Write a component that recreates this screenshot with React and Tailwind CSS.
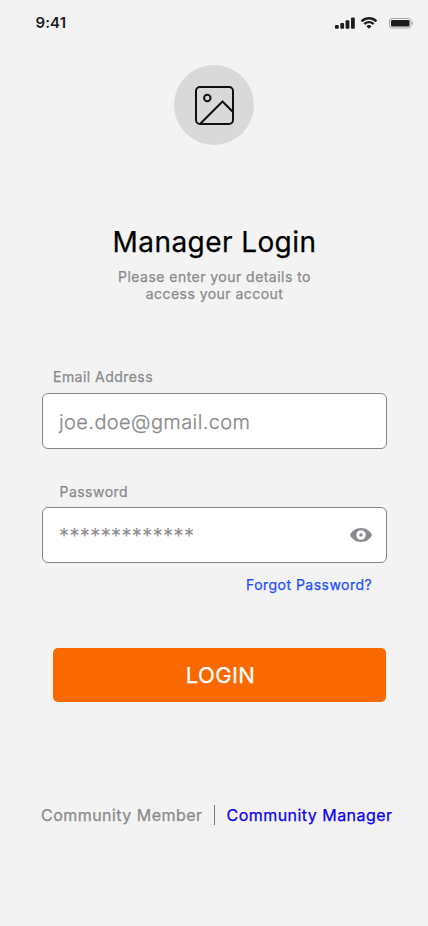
function StatusBar() {
  return (
    <header className="flex h-[46px] items-center justify-between pl-[35.5px] pr-[14px] text-[#1c1c1e] [-webkit-text-stroke:0px]">
      <span className="text-[15px] font-semibold leading-5 tracking-[0.1px]">9:41</span>
      <div className="flex items-center">
        <svg width="20" height="12" viewBox="0 0 20 12" fill="currentColor">
          <rect x="0" y="8" width="3.800" height="3.800" rx="1" />
          <rect x="5.300" y="6" width="3.800" height="5.800" rx="1" />
          <rect x="10.600" y="3.300" width="3.800" height="8.500" rx="1" />
          <rect x="16" y="0.600" width="3.800" height="11.200" rx="1" />
        </svg>
        <svg className="ml-[5px]" width="18" height="12" viewBox="0 0 17 12" fill="currentColor">
          <path d="M8.5 2.4c2.4 0 4.6.9 6.3 2.5.1.1.3.1.5 0l1.2-1.2c.2-.2.2-.4 0-.5-4.4-4.2-11.500-4.200-16 0-.1.1-.1.4 0 .5l1.200 1.200c.1.100.300.100.500 0C3.900 3.300 6.100 2.400 8.500 2.400zM8.500 6.300c1.300 0 2.600.5 3.500 1.400.100.100.400.100.500 0l1.200-1.200c.2-.2.2-.4 0-.5-2.900-2.800-7.500-2.800-10.400 0-.2.100-.2.400 0 .5l1.200 1.200c.100.100.400.100.500 0 1-.9 2.200-1.400 3.500-1.400zM10.800 8.900c.2.200.2.400 0 .5l-2.100 2.100c-.1.100-.4.100-.5 0L6.100 9.400c-.1-.1-.1-.4 0-.5 1.400-1.100 3.300-1.100 4.700 0z" />
        </svg>
        <svg className="ml-[11px]" width="25" height="12" viewBox="0 0 25 12">
          <rect x="0.500" y="1.500" width="21.500" height="9.500" rx="2.500" fill="none" stroke="#a5a5a6" />
          <rect x="2" y="3" width="18.500" height="6.500" rx="1.200" fill="currentColor" />
          <path d="M23 4.500c1.300.6 1.300 2.900 0 3.500z" fill="#a5a5a6" />
        </svg>
      </div>
    </header>
  );
}

function Avatar() {
  return (
    <div className="mt-[19px] ml-[174px] flex size-20 items-center justify-center rounded-full bg-[#d9d9d9]">
      <svg width="40" height="40" viewBox="0 0 40 40" fill="none" stroke="#101010" strokeWidth="2">
        <rect x="2" y="2" width="37" height="37" rx="4" />
        <circle cx="13.300" cy="13" r="3.200" />
        <path d="M6.500 38.500L28.500 16.500L39 27" />
      </svg>
    </div>
  );
}

export default function App() {
  return (
    <div className="flex h-[926px] w-[428px] flex-col overflow-hidden bg-[#f3f3f3] font-['Inter',sans-serif] text-[#8a8a8c] [-webkit-text-stroke:0.25px]">
      <StatusBar />
      <Avatar />
      <h1 className="mt-[80px] pl-px text-center text-[28px] font-normal leading-[34px] tracking-[0.42px] text-black">
        Manager Login
      </h1>
      <p className="mt-[9px] pl-px text-center text-sm font-normal leading-[17px] tracking-[0.46px]">
        Please enter your details to
        <br />
        access your accout
      </p>
      <form className="flex flex-col">
        <label htmlFor="email" className="mt-[66px] ml-[53px] h-[17px] text-sm font-normal leading-[17px] tracking-[0.46px]">
          Email Address
        </label>
        <div className="mt-[8px] ml-[42px] flex h-14 w-[345px] items-center rounded-md border border-[#858587] bg-white pl-[16px] pt-[2px]">
          <span id="email" className="text-xl font-light leading-6 tracking-[0.4px]">joe.doe@gmail.com</span>
        </div>
        <label htmlFor="password" className="mt-[34px] ml-[59.5px] h-[17px] text-sm font-normal leading-[17px] tracking-[0.47px]">
          Password
        </label>
        <div className="mt-[7px] ml-[42px] flex h-14 w-[345px] items-center justify-between rounded-md border border-[#858587] bg-white pl-[16px] pr-[14px]">
          <span id="password" className="pt-[2px] text-xl font-light leading-6 tracking-[0.4px]">*************</span>
          <svg width="22" height="14" viewBox="0 0 22 14" fill="#8a8a8e">
            <path fillRule="evenodd" d="M11 0C6 0 1.800 2.800 0 7c1.800 4.200 6 7 11 7s9.200-2.800 11-7c-1.800-4.200-6-7-11-7zm0 11.800a4.800 4.800 0 1 1 0-9.600 4.800 4.800 0 0 1 0 9.600z" />
            <circle cx="11" cy="7" r="1.700" />
          </svg>
        </div>
        <a className="mt-[13px] ml-[246px] h-[17px] whitespace-nowrap text-sm font-normal leading-[17px] tracking-[0.47px] text-[#1f4fff]">
          Forgot Password?
        </a>
        <button type="button" className="mt-[55px] ml-[53px] flex h-[54px] w-[333px] items-center justify-center rounded-[5px] bg-[#fa6800] pl-[2px] text-[22px] font-normal leading-7 tracking-[0.4px] text-white">
          LOGIN
        </button>
      </form>
      <nav className="mt-[103px] flex h-5 items-center pl-[41px] text-base font-normal leading-5 tracking-[0.46px] whitespace-nowrap">
        <span className="w-[162px]">Community Member</span>
        <span className="mr-[11.5px] ml-[11px] h-5 w-px bg-[#77777a]" />
        <a className="text-[#0900f0]">Community Manager</a>
      </nav>
    </div>
  );
}
